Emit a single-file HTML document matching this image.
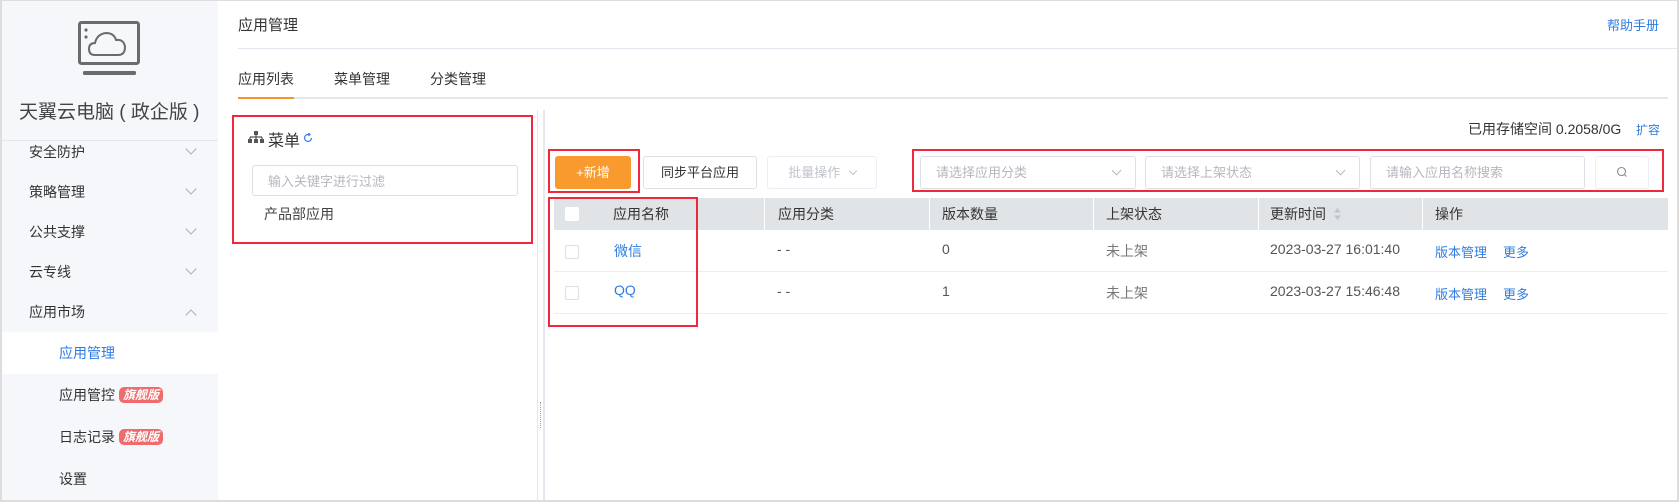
<!DOCTYPE html>
<html><head><meta charset="utf-8"><style>
*{margin:0;padding:0;box-sizing:border-box}
body{width:1679px;height:502px;overflow:hidden;background:#fff;font-family:"Liberation Sans","Noto Sans CJK SC",sans-serif;color:#333;font-size:14px;position:relative}
.a{position:absolute;white-space:nowrap}
.frame{position:absolute;left:0;top:0;width:1679px;height:502px;border:2px solid #ddd;border-top-width:1px;pointer-events:none}
.side{position:absolute;left:1px;top:0;width:217px;height:502px;background:#f5f7fa}
.mi{position:absolute;left:28px;font-size:14px;color:#333}
.chev{position:absolute;left:186px;width:8px;height:8px;border-right:1px solid #a8abb2;border-bottom:1px solid #a8abb2;transform:rotate(45deg)}
.chev.up{transform:rotate(-135deg)}
.tag{display:inline-block;background:#f06b6b;color:#fff;font-size:12px;font-style:italic;font-weight:bold;border-radius:5px;padding:0 4px;line-height:16px;margin-left:4px;vertical-align:1px}
.red{position:absolute;border:2px solid #f0283c}
.btn{position:absolute;top:156px;height:33px;border:1px solid #dcdfe6;border-radius:3px;font-size:13px;text-align:center;line-height:31px;background:#fff}
.inp{position:absolute;top:156px;height:33px;border:1px solid #dcdfe6;border-radius:3px;font-size:13px;color:#b4b7bd;line-height:31px;padding-left:15px;background:#fff}
.sc{position:absolute;right:15px;top:10px;width:7px;height:7px;border-right:1px solid #b4b7bd;border-bottom:1px solid #b4b7bd;transform:rotate(45deg)}
.th{position:absolute;top:198px;height:32px;background:#e1e4e6;line-height:32px;font-size:14px;color:#333}
.td{position:absolute;font-size:14px;color:#555}
.blue{color:#2f7de1}
.cb{position:absolute;width:14px;height:14px;border:1px solid #dcdfe6;border-radius:2px;background:#fff}
.hl{position:absolute;left:554px;width:1114px;height:1px;background:#ebeef5}
</style></head><body>
<div class="side">
  <svg class="a" style="left:77px;top:21px" width="64" height="56" viewBox="0 0 64 56">
    <rect x="1.5" y="1.5" width="59" height="41" rx="2" fill="none" stroke="#6b6b6b" stroke-width="3"/>
    <circle cx="8" cy="9" r="1.6" fill="#6b6b6b"/><circle cx="8" cy="16" r="1.6" fill="#6b6b6b"/>
    <path d="M17 34 Q11 34 11 28 Q11 22 17 22 Q19 13 28 12 Q36 12 38 19 Q46 18 47 26 Q47 34 40 34 Z" fill="none" stroke="#6b6b6b" stroke-width="2"/>
    <rect x="5" y="50" width="53" height="4" rx="1.5" fill="#6b6b6b"/>
  </svg>
  <div class="a" style="left:18px;top:97px;font-size:19px;color:#444">天翼云电脑 ( 政企版 )</div>
  <div class="a" style="left:0;top:140px;width:217px;height:1px;background:#e4e6ea"></div>
  <div class="mi" style="top:142px">安全防护</div><div class="chev" style="top:145px"></div>
  <div class="mi" style="top:182px">策略管理</div><div class="chev" style="top:185px"></div>
  <div class="mi" style="top:222px">公共支撑</div><div class="chev" style="top:225px"></div>
  <div class="mi" style="top:262px">云专线</div><div class="chev" style="top:265px"></div>
  <div class="mi" style="top:302px">应用市场</div><div class="chev up" style="top:311px"></div>
  <div class="a" style="left:0;top:332px;width:217px;height:42px;background:#fff"></div>
  <div class="mi blue" style="left:58px;top:343px">应用管理</div>
  <div class="mi" style="left:58px;top:385px">应用管控<span class="tag">旗舰版</span></div>
  <div class="mi" style="left:58px;top:427px">日志记录<span class="tag">旗舰版</span></div>
  <div class="mi" style="left:58px;top:469px">设置</div>
</div>

<div class="a" style="left:238px;top:14px;font-size:15px;color:#333">应用管理</div>
<div class="a blue" style="left:1607px;top:15px;font-size:13px">帮助手册</div>
<div class="a" style="left:238px;top:48px;width:1441px;height:1px;background:#e4e7ed"></div>
<div class="a" style="left:238px;top:69px;font-size:14px">应用列表</div>
<div class="a" style="left:334px;top:69px;font-size:14px">菜单管理</div>
<div class="a" style="left:430px;top:69px;font-size:14px">分类管理</div>
<div class="a" style="left:238px;top:97px;width:1430px;height:2px;background:#e4e7ed"></div>
<div class="a" style="left:238px;top:97px;width:56px;height:2px;background:#f5962d"></div>

<div class="red" style="left:232px;top:115px;width:301px;height:129px"></div>
<svg class="a" style="left:248px;top:131px" width="16" height="13" viewBox="0 0 16 13"><rect x="6" y="0" width="4" height="4" fill="#555"/><path d="M8 4V6M2 6H14M2 6V8M8 6V8M14 6V8" stroke="#555" stroke-width="1.2" fill="none"/><rect x="0" y="8" width="4" height="4" fill="#555"/><rect x="6" y="8" width="4" height="4" fill="#555"/><rect x="12" y="8" width="4" height="4" fill="#555"/></svg>
<div class="a" style="left:268px;top:127px;font-size:16px;color:#333">菜单</div>
<svg class="a" style="left:303px;top:133px" width="10" height="10" viewBox="0 0 10 10"><path d="M8.5 5A3.5 3.5 0 1 1 5 1.5L7 1.5M5.5 0L7 1.5L5.5 3" stroke="#3b7ff0" stroke-width="1.2" fill="none"/></svg>
<div class="inp" style="left:252px;top:165px;width:266px;height:31px;font-size:13px">输入关键字进行过滤</div>
<div class="a" style="left:264px;top:204px;font-size:14px;color:#444">产品部应用</div>

<div class="a" style="left:537px;top:110px;width:1px;height:392px;background:#e4e7ed"></div>
<div class="a" style="left:543px;top:110px;width:2px;height:392px;background:#e4e7ed"></div>
<div class="a" style="left:540px;top:402px;width:1px;height:26px;border-left:1px dotted #a0a4ad"></div>

<div class="a" style="left:1468px;top:119px;font-size:14px;color:#333">已用存储空间 0.2058/0G</div>
<div class="a blue" style="left:1636px;top:121px;font-size:12px">扩容</div>

<div class="btn" style="left:555px;width:76px;background:#f99a2f;border-color:#f99a2f;color:#fff">+新增</div>
<div class="red" style="left:548px;top:149px;width:92px;height:44px"></div>
<div class="btn" style="left:643px;width:114px;color:#333">同步平台应用</div>
<div class="btn" style="left:767px;width:110px;color:#c0c4cc;border-color:#ebeef5">批量操作 <span style="display:inline-block;width:6px;height:6px;border-right:1px solid #c0c4cc;border-bottom:1px solid #c0c4cc;transform:rotate(45deg);margin:0 0 3px 6px"></span></div>
<div class="inp" style="left:920px;width:216px">请选择应用分类<div class="sc"></div></div>
<div class="inp" style="left:1145px;width:215px">请选择上架状态<div class="sc"></div></div>
<div class="inp" style="left:1370px;width:215px">请输入应用名称搜索</div>
<div class="btn" style="left:1595px;width:54px;border-color:#ebeef5"><svg width="12" height="12" viewBox="0 0 12 12" style="vertical-align:-1px"><circle cx="5.5" cy="5.5" r="4" stroke="#888" stroke-width="1.1" fill="none"/><path d="M8.5 8.5L10.5 10.5" stroke="#888" stroke-width="1.1"/></svg></div>
<div class="red" style="left:912px;top:149px;width:752px;height:43px"></div>

<div class="th" style="left:554px;width:210px"><div class="cb" style="left:11px;top:9px;border-color:#fff"></div><span style="position:absolute;left:59px">应用名称</span></div>
<div class="th" style="left:765px;width:164px;padding-left:13px">应用分类</div>
<div class="th" style="left:930px;width:163px;padding-left:12px">版本数量</div>
<div class="th" style="left:1094px;width:164px;padding-left:12px">上架状态</div>
<div class="th" style="left:1259px;width:163px;padding-left:11px">更新时间 <svg width="9" height="14" viewBox="0 0 9 14" style="vertical-align:-2px;margin-left:3px"><path d="M4.5 1L8 5.5H1Z M4.5 13L8 8.5H1Z" fill="#c0c4cc"/></svg></div>
<div class="th" style="left:1423px;width:245px;padding-left:12px">操作</div>

<div class="cb" style="left:565px;top:245px"></div>
<div class="td blue" style="left:614px;top:241px">微信</div>
<div class="td" style="left:777px;top:241px">- -</div>
<div class="td" style="left:942px;top:241px">0</div>
<div class="td" style="left:1106px;top:241px;color:#777">未上架</div>
<div class="td" style="left:1270px;top:241px">2023-03-27 16:01:40</div>
<div class="td blue" style="left:1435px;top:242px;font-size:13px">版本管理</div>
<div class="td blue" style="left:1503px;top:242px;font-size:13px">更多</div>
<div class="hl" style="top:271px"></div>
<div class="cb" style="left:565px;top:286px"></div>
<div class="td blue" style="left:614px;top:282px">QQ</div>
<div class="td" style="left:777px;top:283px">- -</div>
<div class="td" style="left:942px;top:283px">1</div>
<div class="td" style="left:1106px;top:283px;color:#777">未上架</div>
<div class="td" style="left:1270px;top:283px">2023-03-27 15:46:48</div>
<div class="td blue" style="left:1435px;top:284px;font-size:13px">版本管理</div>
<div class="td blue" style="left:1503px;top:284px;font-size:13px">更多</div>
<div class="hl" style="top:313px"></div>
<div class="red" style="left:548px;top:197px;width:150px;height:130px"></div>
<div class="frame"></div>
</body></html>
